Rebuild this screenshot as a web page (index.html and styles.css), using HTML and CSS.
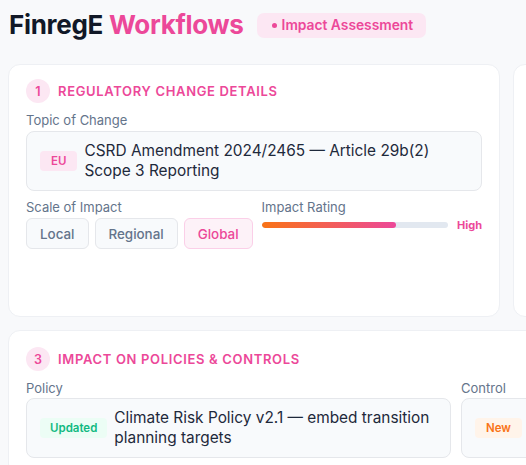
FILE: index.html
```html
<!DOCTYPE html>
<html>
<head>
<meta charset="utf-8">
<link rel="stylesheet" href="styles.css">
</head>
<body>
<div class="page">
  <header class="top">
    <h1 class="brand"><span class="brand-dark">FinregE</span> <span class="brand-pink">Workflows</span></h1>
    <span class="stage"><span class="stage-dot"></span>Impact Assessment</span>
  </header>

  <div class="grid">
    <section class="card card-tall">
      <div class="card-head">
        <span class="step">1</span>
        <h2 class="card-title">Regulatory Change Details</h2>
      </div>
      <div class="field">
        <div class="label">Topic of Change</div>
        <div class="box">
          <span class="tag tag-pink">EU</span>
          <span class="box-text">CSRD Amendment 2024/2465 — Article 29b(2) Scope 3 Reporting</span>
        </div>
      </div>
      <div class="split">
        <div class="field">
          <div class="label">Scale of Impact</div>
          <div class="seg">
            <span class="seg-btn">Local</span>
            <span class="seg-btn">Regional</span>
            <span class="seg-btn seg-on">Global</span>
          </div>
        </div>
        <div class="field rating">
          <div class="label">Impact Rating</div>
          <div class="rating-row">
            <div class="track"><div class="fill" style="width:72%"></div></div>
            <span class="rating-val">High</span>
          </div>
        </div>
      </div>
    </section>

    <section class="card card-tall"></section>

    <section class="card card-wide">
      <div class="card-head">
        <span class="step">3</span>
        <h2 class="card-title">Impact on Policies &amp; Controls</h2>
      </div>
      <div class="pc-grid">
        <div class="field">
          <div class="label">Policy</div>
          <div class="box">
            <span class="tag tag-green">Updated</span>
            <span class="box-text">Climate Risk Policy v2.1 — embed transition planning targets</span>
          </div>
        </div>
        <div class="field">
          <div class="label">Control</div>
          <div class="box">
            <span class="tag tag-orange">New</span>
          </div>
        </div>
      </div>
    </section>
  </div>
</div>
</body>
</html>
```

FILE: styles.css
```css
html, body {
  margin: 0;
  padding: 0;
  overflow: hidden;
  background: #f8f9fb;
}
body {
  font-family: Inter, "Noto Sans", sans-serif;
  color: #1e293b;
}
.page {
  width: 1100px;
  padding: 8px 0 0 8px;
}
.top {
  display: flex;
  align-items: center;
  gap: 13px;
  height: 34px;
  margin-bottom: 22px;
}
.brand {
  margin: 0;
  font-size: 26px;
  font-weight: 700;
  letter-spacing: -0.3px;
  line-height: 34px;
  padding-left: 1px;
}
.brand-dark { color: #111827; }
.brand-pink { color: #ec4899; }
.stage {
  display: inline-flex;
  align-items: center;
  gap: 5px;
  height: 25px;
  padding: 0 13px 0 15px;
  border-radius: 7px;
  background: #fce7f3;
  color: #ec4899;
  font-size: 13.8px;
  font-weight: 600;
}
.stage-dot {
  width: 5px;
  height: 5px;
  border-radius: 50%;
  background: #ec4899;
}
.grid {
  display: grid;
  grid-template-columns: 492px 492px;
  column-gap: 13px;
  row-gap: 13px;
}
.card {
  background: #fff;
  border: 1px solid #eef0f4;
  border-radius: 12px;
  padding: 14px 17px 17px;
}
.card-tall { min-height: 220px; }
.card-wide { grid-column: 1 / span 2; padding-top: 16px; }
.card-head {
  display: flex;
  align-items: center;
  gap: 8px;
  margin-bottom: 9px;
}
.step {
  width: 24px;
  height: 24px;
  border-radius: 50%;
  background: #fce7f3;
  color: #ec4899;
  font-size: 12.5px;
  font-weight: 600;
  display: flex;
  align-items: center;
  justify-content: center;
}
.card-title {
  margin: 0;
  font-size: 13px;
  font-weight: 600;
  text-transform: uppercase;
  letter-spacing: 0.66px;
  color: #ec4899;
}
.label {
  font-size: 13px;
  line-height: 16px;
  color: #64748b;
  margin-bottom: 3px;
}
.card-wide .label { margin-bottom: 2px; }
.box {
  display: flex;
  align-items: center;
  gap: 7px;
  background: #f8fafc;
  border: 1px solid #e5e7eb;
  border-radius: 8px;
  padding: 9px 13px;
  min-height: 40px;
}
.box-text {
  font-size: 15.4px;
  line-height: 20px;
  color: #1e293b;
}
.tag {
  flex: none;
  font-size: 11.5px;
  font-weight: 600;
  line-height: 20px;
  padding: 0 10px;
  border-radius: 4px;
}
.tag-pink { background: #fce7f3; color: #ec4899; padding: 0 11px; }
.tag-green { background: #ecfdf5; color: #10b981; }
.tag-orange { background: #fff4ea; color: #f97316; padding: 0 11px; }
.split {
  display: flex;
  gap: 9px;
  margin-top: 8px;
}
.seg {
  display: flex;
  gap: 6px;
}
.seg-btn {
  height: 29px;
  padding: 0 13px;
  display: flex;
  align-items: center;
  border: 1px solid #e5e7eb;
  border-radius: 6px;
  background: #f8fafc;
  color: #64748b;
  font-size: 13.4px;
  font-weight: 500;
}
.seg-on {
  background: #fdf2f8;
  border-color: #fbcfe8;
  color: #ec4899;
}
.rating { flex: 1; }
.rating-row {
  display: flex;
  align-items: center;
  gap: 9px;
  margin-top: 1px;
}
.track {
  flex: 1;
  height: 6px;
  border-radius: 3px;
  background: #e2e8f0;
  overflow: hidden;
}
.fill {
  height: 100%;
  border-radius: 3px;
  background: linear-gradient(90deg, #f97316, #ec4899);
}
.rating-val {
  font-size: 11px;
  font-weight: 700;
  color: #ec4899;
}
.pc-grid {
  display: grid;
  grid-template-columns: 425px 425px;
  gap: 10px;
}
```
